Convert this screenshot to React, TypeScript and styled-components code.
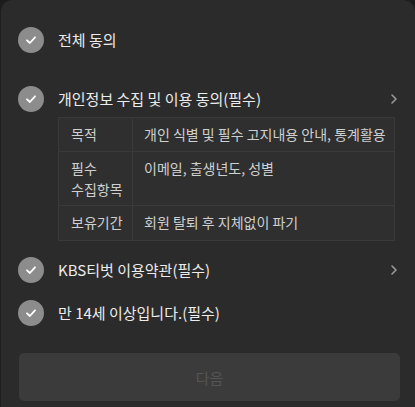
import React from "react";
import styled, { createGlobalStyle } from "styled-components";

const Global = createGlobalStyle`
  html, body { margin: 0; padding: 0; background: #1c1c1c; }
  body { font-family: "Noto Sans CJK KR", "Noto Sans", sans-serif; }
  * { box-sizing: border-box; }
`;

const Sheet = styled.div`
  width: 415px;
  height: 407px;
  background: #2b2b2b;
  border-top-left-radius: 12px;
  border-top-right-radius: 12px;
  border-left: 1px solid #1e1e1e;
  padding: 27px 15px 0 17px;
  display: flex;
  flex-direction: column;
`;

const Row = styled.div<{ $gap: number }>`
  display: flex;
  align-items: center;
  height: 26px;
  margin-top: ${(p) => p.$gap}px;
`;

const Check = styled.span`
  width: 26px;
  height: 26px;
  border-radius: 50%;
  background: #8c8c8c;
  display: flex;
  align-items: center;
  justify-content: center;
  flex: none;
`;

const Label = styled.span`
  margin-left: 14px;
  flex: 1;
  font-size: 15px;
  color: #ececec;
  line-height: 20px;
`;

const Chevron = styled.span`
  width: 12px;
  display: flex;
  justify-content: center;
  margin-right: 0;
`;

const Table = styled.div`
  margin: 5px 5px 0 40px;
  display: grid;
  grid-template-columns: 74px 1fr;
  background: #2f2f2f;
  border: 1px solid #3a3a3a;
`;

const Cell = styled.div<{ $head?: boolean; $last?: boolean; $h: number }>`
  font-size: 14px;
  line-height: 21px;
  color: #cfcfcf;
  padding: 6px 0 0 ${(p) => (p.$head ? 12 : 11)}px;
  height: ${(p) => p.$h}px;
  border-bottom: ${(p) => (p.$last ? "none" : "1px solid #3a3a3a")};
  border-right: ${(p) => (p.$head ? "1px solid #3a3a3a" : "none")};
  white-space: nowrap;
`;

const Button = styled.button`
  margin: 27px 0 0 1px;
  height: 48px;
  border: none;
  border-radius: 5px;
  background: #3b3b3b;
  color: #555555;
  font-family: inherit;
  font-size: 15px;
`;

const CheckIcon = () => (
  <svg width="14" height="14" viewBox="0 0 14 14">
    <path d="M3 7.3 L5.9 10 L11 4.3" fill="none" stroke="#fff" strokeWidth="1.8" strokeLinecap="round" strokeLinejoin="round" />
  </svg>
);

const ChevronIcon = () => (
  <svg width="8" height="12" viewBox="0 0 8 12">
    <path d="M2 2 L6 6 L2 10" fill="none" stroke="#9a9a9a" strokeWidth="1.6" strokeLinecap="round" strokeLinejoin="round" />
  </svg>
);

const rows = [
  { head: "목적", value: "개인 식별 및 필수 고지내용 안내, 통계활용", h: 34 },
  { head: "필수\n수집항목", value: "이메일, 출생년도, 성별", h: 54 },
  { head: "보유기간", value: "회원 탈퇴 후 지체없이 파기", h: 34 },
];

export default function App() {
  return (
    <>
      <Global />
      <Sheet>
        <Row $gap={0}>
          <Check><CheckIcon /></Check>
          <Label>전체 동의</Label>
        </Row>
        <Row $gap={33}>
          <Check><CheckIcon /></Check>
          <Label>개인정보 수집 및 이용 동의(필수)</Label>
          <Chevron><ChevronIcon /></Chevron>
        </Row>
        <Table>
          {rows.map((r, i) => (
            <React.Fragment key={r.head}>
              <Cell $head $h={r.h} $last={i === rows.length - 1}>
                {r.head.split("\n").map((l) => (
                  <div key={l}>{l}</div>
                ))}
              </Cell>
              <Cell $h={r.h} $last={i === rows.length - 1}>{r.value}</Cell>
            </React.Fragment>
          ))}
        </Table>
        <Row $gap={16}>
          <Check><CheckIcon /></Check>
          <Label>KBS티벗 이용약관(필수)</Label>
          <Chevron><ChevronIcon /></Chevron>
        </Row>
        <Row $gap={17}>
          <Check><CheckIcon /></Check>
          <Label>만 14세 이상입니다.(필수)</Label>
        </Row>
        <Button>다음</Button>
      </Sheet>
    </>
  );
}
